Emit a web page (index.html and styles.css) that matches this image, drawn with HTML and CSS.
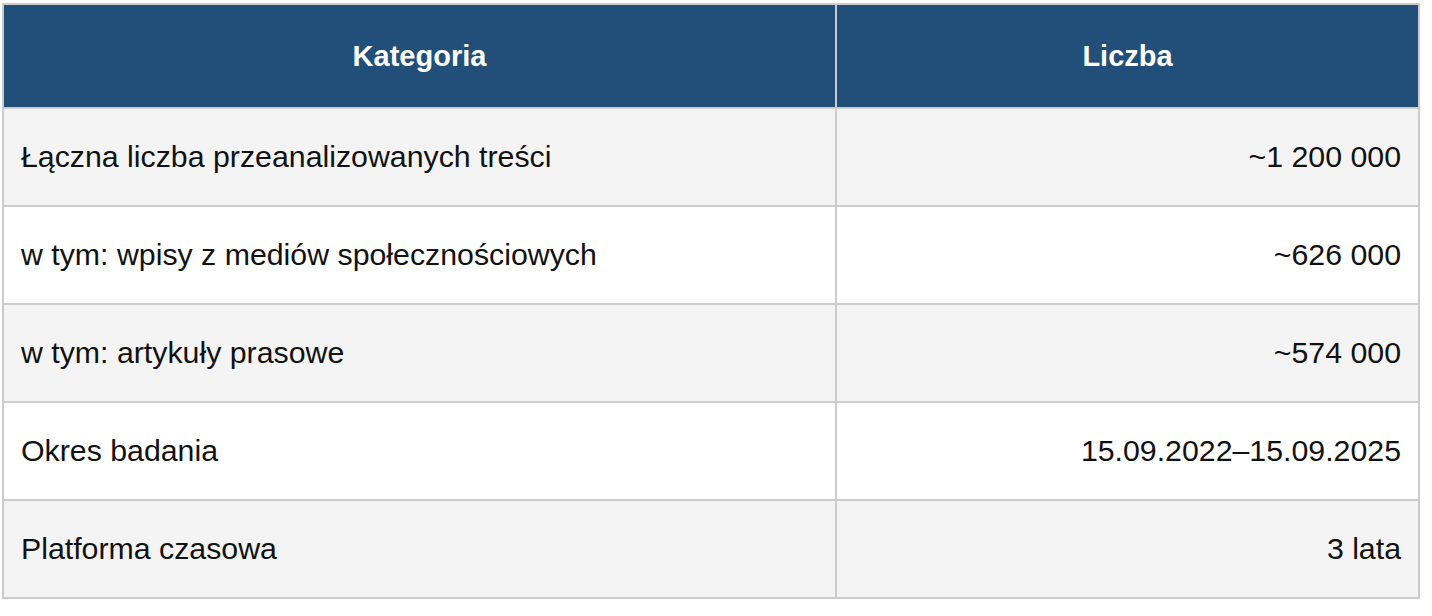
FILE: index.html
```html
<!DOCTYPE html>
<html lang="pl">
<head>
<meta charset="utf-8">
<title>Tabela</title>
<link rel="stylesheet" href="styles.css">
</head>
<body>
<table class="data">
  <thead>
    <tr class="head-row">
      <th class="col-cat">Kategoria</th>
      <th class="col-num">Liczba</th>
    </tr>
  </thead>
  <tbody>
    <tr class="row alt">
      <td class="cat">Łączna liczba przeanalizowanych treści</td>
      <td class="num">~1 200 000</td>
    </tr>
    <tr class="row">
      <td class="cat">w tym: wpisy z mediów społecznościowych</td>
      <td class="num">~626 000</td>
    </tr>
    <tr class="row alt">
      <td class="cat">w tym: artykuły prasowe</td>
      <td class="num">~574 000</td>
    </tr>
    <tr class="row">
      <td class="cat">Okres badania</td>
      <td class="num">15.09.2022–15.09.2025</td>
    </tr>
    <tr class="row alt">
      <td class="cat">Platforma czasowa</td>
      <td class="num">3 lata</td>
    </tr>
  </tbody>
</table>
</body>
</html>
```
FILE: styles.css
```css
html, body {
  margin: 0;
  padding: 0;
  background: #ffffff;
}

body {
  padding: 3px 0 0 2px;
  font-family: "Liberation Sans", Arial, sans-serif;
  color: #111111;
}

.data {
  border-collapse: collapse;
  width: 1418px;
  table-layout: fixed;
}

.data th,
.data td {
  border: 2px solid #cccccc;
  padding: 0 17px;
  vertical-align: middle;
}

.col-cat { width: 797px; }

.head-row {
  height: 104px;
  background: #214f7a;
}

.head-row th {
  color: #ffffff;
  font-weight: bold;
  font-size: 29px;
  text-align: center;
}

.row {
  height: 98px;
  background: #ffffff;
}

.row.alt {
  background: #f4f4f4;
}

.row td {
  font-size: 30.3px;
}

.cat { text-align: left; }
.num { text-align: right; }
```
